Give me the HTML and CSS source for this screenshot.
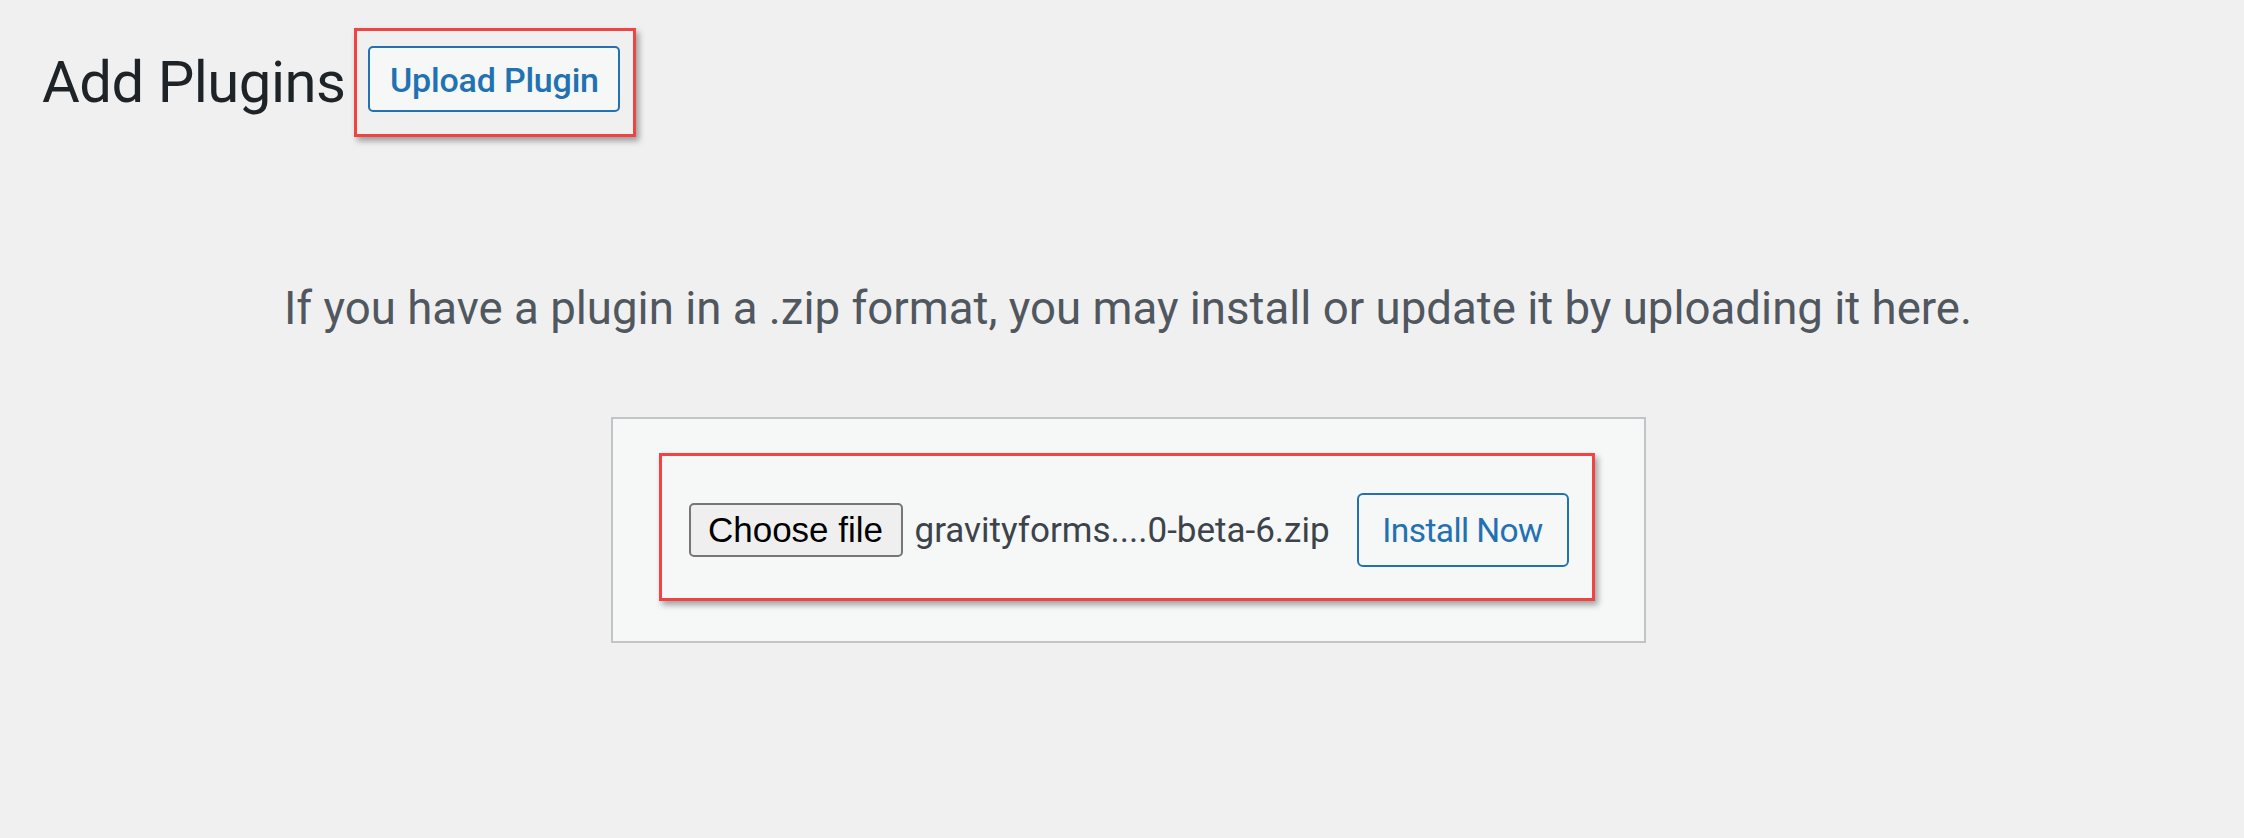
FILE: index.html
```html
<!DOCTYPE html>
<html>
<head>
<meta charset="utf-8">
<link rel="stylesheet" href="styles.css">
</head>
<body>
<div class="wrap">
  <div class="head">
    <h1 class="title">Add Plugins</h1>
    <div class="mark mark-upload"><a class="title-action">Upload Plugin</a></div>
  </div>
  <div class="upload">
    <p class="instructions">If you have a plugin in a .zip format, you may install or update it by uploading it here.</p>
    <form class="upload-form">
      <div class="mark mark-form">
        <span class="file-btn">Choose file</span>
        <span class="file-name">gravityforms....0-beta-6.zip</span>
        <span class="install">Install Now</span>
      </div>
    </form>
  </div>
</div>
</body>
</html>
```
FILE: styles.css
```css
body { margin: 0; background: #f0f0f1; font-family: Roboto, "Open Sans", sans-serif; }
.wrap { padding: 0 30px 0 42px; }
.head { display: flex; align-items: flex-start; padding-top: 28px; }
.title { margin: 25px 9px 0 0; font-size: 58px; line-height: 58px; letter-spacing: -0.5px; font-weight: 400; color: #1d2327; }
.mark { border: 3px solid #f04444; box-shadow: 3px 4px 6px rgba(0,0,0,0.35); }
.mark-upload { padding: 15px 13px 22px 11px; }
.title-action { box-sizing: border-box; width: 252px; height: 66px; padding-top: 2px; display: flex; align-items: center; justify-content: center; border: 2px solid #2271b1; border-radius: 5px; background: #f6f7f7; color: #2271b1; font-weight: 500; font-size: 34px; letter-spacing: -0.2px; }
.upload { text-align: center; }
.instructions { margin: 147px 0 0; font-size: 45.6px; line-height: 50px; color: #50575e; }
.upload-form { box-sizing: border-box; width: 1035px; margin: 83px auto 0; border: 2px solid #c3c4c7; background: #f6f7f7; padding: 34px 49px 40px 46px; text-align: left; }
.mark-form { display: flex; align-items: center; padding: 37px 23px 31px 27px; }
.file-btn { box-sizing: border-box; width: 214px; height: 54px; display: flex; align-items: center; justify-content: center; border: 2px solid #767676; border-radius: 5px; background: #efefef; font-family: "Liberation Sans", Arial, sans-serif; font-size: 35px; color: #000; }
.file-name { margin-left: 12px; font-size: 35px; color: #3c434a; }
.install { box-sizing: border-box; margin-left: auto; width: 212px; height: 74px; display: flex; align-items: center; justify-content: center; border: 2px solid #2271b1; border-radius: 6px; color: #2271b1; font-size: 33.5px; letter-spacing: -0.6px; }
```
